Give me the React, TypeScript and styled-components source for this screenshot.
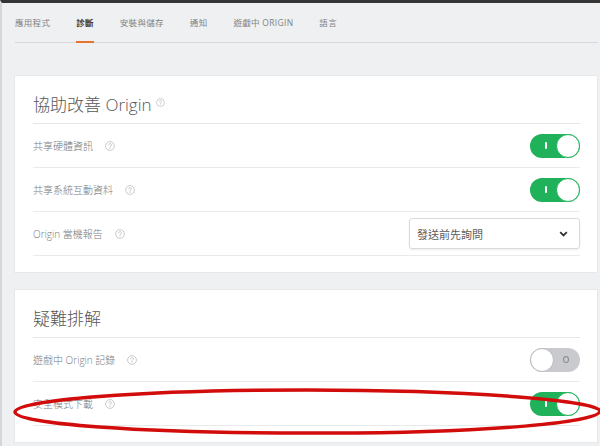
import React from "react";
import styled, { createGlobalStyle } from "styled-components";

const GlobalStyle = createGlobalStyle`
  html, body { margin: 0; padding: 0; }
  body {
    width: 600px;
    height: 446px;
    overflow: hidden;
    background: #eef0f1;
    font-family: "Open Sans", "Noto Sans CJK TC", sans-serif;
  }
`;

const Page = styled.div`
  position: relative;
  box-sizing: border-box;
  height: 446px;
  border-top: 3px solid #353535;
  border-left: 2px solid #d4d7d9;
  background: #eef0f1;
`;

const TabBar = styled.nav`
  display: flex;
  gap: 26px;
  margin: 0 2px 0 13px;
  padding-top: 14px;
  border-bottom: 1px solid #d6d9db;
`;

const Tab = styled.div<{ $active?: boolean }>`
  font-family: "Open Sans", "Noto Sans CJK TC", sans-serif;
  font-size: 8.5px;
  line-height: 12px;
  letter-spacing: 0.3px;
  color: ${(p) => (p.$active ? "#333" : "#808385")};
  font-weight: ${(p) => (p.$active ? 600 : 400)};
  padding-bottom: 12px;
  border-bottom: 2px solid ${(p) => (p.$active ? "#e8722f" : "transparent")};
  margin-bottom: -1px;
`;

const Main = styled.main`
  padding: 33px 3px 0 13px;
`;

const Card = styled.section`
  background: #fff;
  padding: 0 17px 16px 18px;
  box-shadow: 0 0 0 1px #e6e9eb;
  & + & {
    margin-top: 18px;
  }
`;

const CardTitle = styled.h2`
  display: flex;
  align-items: center;
  margin: 0;
  padding: 16px 0 5px;
  line-height: 26px;
  font-size: 17px;
  font-weight: 300;
  color: #575757;
  border-bottom: 1px solid #e4e6e8;
`;

const TitleHelp = styled.span`
  display: inline-flex;
  margin-left: 4px;
  margin-top: -6px;
`;

const Row = styled.div`
  display: flex;
  align-items: center;
  justify-content: space-between;
  height: 43px;
  border-bottom: 1px solid #e8eaec;
`;

const Label = styled.span`
  display: flex;
  align-items: center;
  gap: 12px;
  font-size: 10px;
  font-weight: 300;
  color: #797b7c;
`;

const ToggleTrack = styled.span<{ $on: boolean }>`
  display: flex;
  flex-direction: ${(p) => (p.$on ? "row" : "row-reverse")};
  align-items: center;
  width: 50px;
  height: 24px;
  border-radius: 12px;
  background: ${(p) => (p.$on ? "#1fb25a" : "#c8cacd")};
`;

const ToggleMark = styled.span<{ $on: boolean }>`
  flex: 1;
  display: flex;
  align-items: center;
  justify-content: center;
  padding-left: ${(p) => (p.$on ? "5px" : "0")};
  padding-right: ${(p) => (p.$on ? "0" : "3px")};
`;

const OnBar = styled.span`
  width: 2px;
  height: 7px;
  background: #fff;
  border-radius: 1px;
`;

const OffRing = styled.span`
  box-sizing: border-box;
  width: 6px;
  height: 7px;
  border: 1.4px solid #8b8d91;
  border-radius: 50%;
`;

const Knob = styled.span<{ $on: boolean }>`
  box-sizing: border-box;
  width: 24px;
  height: 24px;
  border-radius: 50%;
  background: #fff;
  border: 1px solid ${(p) => (p.$on ? "#1fb25a" : "#b9bbbf")};
`;

const Select = styled.div`
  box-sizing: border-box;
  width: 171px;
  height: 31px;
  display: flex;
  align-items: center;
  justify-content: space-between;
  padding: 0 11px 0 7px;
  border: 1px solid #d9dadb;
  border-radius: 3px;
  box-shadow: 0 1px 2px rgba(0, 0, 0, 0.08);
  font-size: 11px;
  color: #5a5a5a;
`;

const Overlay = styled.svg`
  position: absolute;
  top: 0;
  left: 0;
  width: 600px;
  height: 446px;
  pointer-events: none;
`;

const HelpIcon = ({ size = 10 }: { size?: number }) => (
  <svg width={size} height={size} viewBox="0 0 10 10" fill="none">
    <circle cx="5" cy="5" r="4.4" stroke="#bcbec0" strokeWidth="0.8" />
    <path
      d="M3.7 3.9a1.35 1.35 0 1 1 2.1 1.1c-.5.3-.8.6-.8 1.1v.3"
      stroke="#bcbec0"
      strokeWidth="0.8"
      strokeLinecap="round"
    />
    <circle cx="5" cy="7.5" r="0.5" fill="#bcbec0" />
  </svg>
);

const Toggle = ({ on }: { on: boolean }) => (
  <ToggleTrack $on={on}>
    <ToggleMark $on={on}>{on ? <OnBar /> : <OffRing />}</ToggleMark>
    <Knob $on={on} />
  </ToggleTrack>
);

const Chevron = () => (
  <svg width="9" height="6" viewBox="0 0 9 6" fill="none">
    <path d="M1.2 1.2 L4.5 4.4 L7.8 1.2" stroke="#333" strokeWidth="1.8" />
  </svg>
);

const tabs = ["應用程式", "診斷", "安裝與儲存", "通知", "遊戲中 ORIGIN", "語言"];

export default function App() {
  return (
    <>
      <GlobalStyle />
      <Page>
        <TabBar>
          {tabs.map((t) => (
            <Tab key={t} $active={t === "診斷"}>
              {t}
            </Tab>
          ))}
        </TabBar>
        <Main>
          <Card>
            <CardTitle>
              協助改善 Origin
              <TitleHelp>
                <HelpIcon size={9} />
              </TitleHelp>
            </CardTitle>
            <Row>
              <Label>
                共享硬體資訊 <HelpIcon />
              </Label>
              <Toggle on />
            </Row>
            <Row>
              <Label>
                共享系統互動資料 <HelpIcon />
              </Label>
              <Toggle on />
            </Row>
            <Row>
              <Label>
                Origin 當機報告 <HelpIcon />
              </Label>
              <Select>
                發送前先詢問
                <Chevron />
              </Select>
            </Row>
          </Card>
          <Card>
            <CardTitle>疑難排解</CardTitle>
            <Row>
              <Label>
                遊戲中 Origin 記錄 <HelpIcon />
              </Label>
              <Toggle on={false} />
            </Row>
            <Row>
              <Label>
                安全模式下載 <HelpIcon />
              </Label>
              <Toggle on />
            </Row>
          </Card>
        </Main>
        <Overlay viewBox="0 0 600 446">
          <path
            d="M13 409 C13 397, 140 387, 305 387 C470 387, 598 398, 598 408 C598 420, 470 431, 305 430 C140 430, 13 421, 13 409 Z"
            fill="none"
            stroke="#d20b0b"
            strokeWidth="3.5"
          />
        </Overlay>
      </Page>
    </>
  );
}
